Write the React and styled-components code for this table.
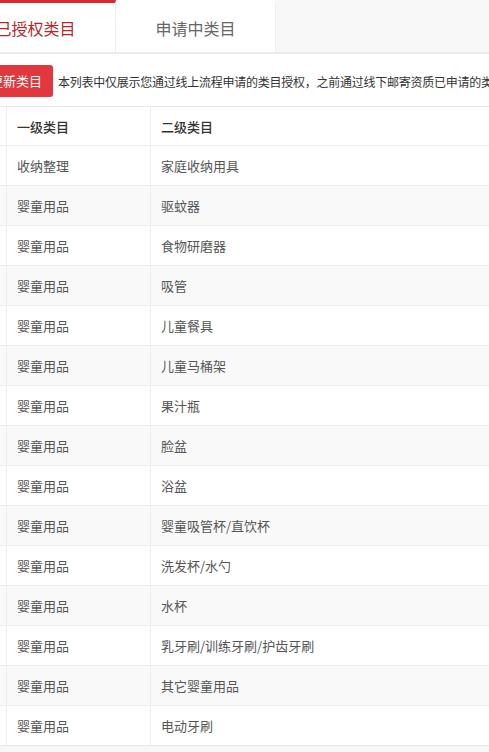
import React from "react";
import styled, { createGlobalStyle } from "styled-components";

const GlobalStyle = createGlobalStyle`
  html, body {
    margin: 0;
    padding: 0;
    background: #fff;
    overflow: hidden;
    font-family: "Noto Sans CJK SC", "Liberation Sans", sans-serif;
  }
`;

const Viewport = styled.div`
  width: 489px;
  height: 752px;
  overflow: hidden;
  background: #f7f7f7;
`;

// the page is scrolled sideways in the shot, so the content starts left of the window
const Shifted = styled.div`
  margin-left: -44px;
  width: 900px;
`;

const TabBar = styled.div`
  display: flex;
  height: 52px;
  background: #f8f8f8;
  border-bottom: 2px solid #ececec;
`;

const Tab = styled.div`
  width: 160px;
  box-sizing: border-box;
  display: flex;
  align-items: center;
  justify-content: center;
  font-size: 16px;
  background: #fff;
  border-right: 1px solid #eee;
  border-top: 3px solid ${(p) => (p.active ? "#d9282e" : "#fff")};
  color: ${(p) => (p.active ? "#b8242a" : "#666")};
`;

const Body = styled.div`
  background: #fff;
`;

const NoticeRow = styled.div`
  display: flex;
  align-items: center;
  gap: 5px;
  padding: 11px 0 9px 21px;
`;

const RedButton = styled.div`
  background: #e0383c;
  color: #fff;
  font-size: 13px;
  height: 32px;
  line-height: 32px;
  padding: 0 11px 0 13px;
  border-radius: 3px;
  white-space: nowrap;
`;

const Notice = styled.span`
  font-size: 12px;
  letter-spacing: -0.25px;
  color: #333;
  white-space: nowrap;
`;

const Table = styled.div`
  margin-left: 21px;
  border-top: 1px solid #e8e8e8;
  border-bottom: 1px solid #e8e8e8;
`;

const Row = styled.div`
  display: grid;
  grid-template-columns: 30px 144px 1fr;
  height: ${(p) => (p.first ? "38px" : "39px")};
  border-top: ${(p) => (p.first ? "none" : "1px solid #ededed")};
  background: ${(p) => (p.striped ? "#f9f9f9" : "#fff")};
`;

const Cell = styled.div`
  display: flex;
  align-items: center;
  padding-left: 10px;
  border-right: 1px solid #ececec;
  font-size: 13px;
  color: ${(p) => (p.head ? "#333" : "#555")};
  font-weight: ${(p) => (p.head ? 500 : "normal")};
  white-space: nowrap;
`;

const rows = [
  ["收纳整理", "家庭收纳用具"],
  ["婴童用品", "驱蚊器"],
  ["婴童用品", "食物研磨器"],
  ["婴童用品", "吸管"],
  ["婴童用品", "儿童餐具"],
  ["婴童用品", "儿童马桶架"],
  ["婴童用品", "果汁瓶"],
  ["婴童用品", "脸盆"],
  ["婴童用品", "浴盆"],
  ["婴童用品", "婴童吸管杯/直饮杯"],
  ["婴童用品", "洗发杯/水勺"],
  ["婴童用品", "水杯"],
  ["婴童用品", "乳牙刷/训练牙刷/护齿牙刷"],
  ["婴童用品", "其它婴童用品"],
  ["婴童用品", "电动牙刷"],
];

export default function App() {
  return (
    <Viewport>
      <GlobalStyle />
      <Shifted>
        <TabBar>
          <Tab active>已授权类目</Tab>
          <Tab>申请中类目</Tab>
        </TabBar>
        <Body>
          <NoticeRow>
            <RedButton>更新类目</RedButton>
            <Notice>
              本列表中仅展示您通过线上流程申请的类目授权，之前通过线下邮寄资质已申请的类目请联系客服查询
            </Notice>
          </NoticeRow>
          <Table>
            <Row first>
              <Cell />
              <Cell head>一级类目</Cell>
              <Cell head>二级类目</Cell>
            </Row>
            {rows.map((r, i) => (
              <Row key={i} striped={i % 2 === 1}>
                <Cell />
                <Cell>{r[0]}</Cell>
                <Cell>{r[1]}</Cell>
              </Row>
            ))}
          </Table>
        </Body>
      </Shifted>
    </Viewport>
  );
}
